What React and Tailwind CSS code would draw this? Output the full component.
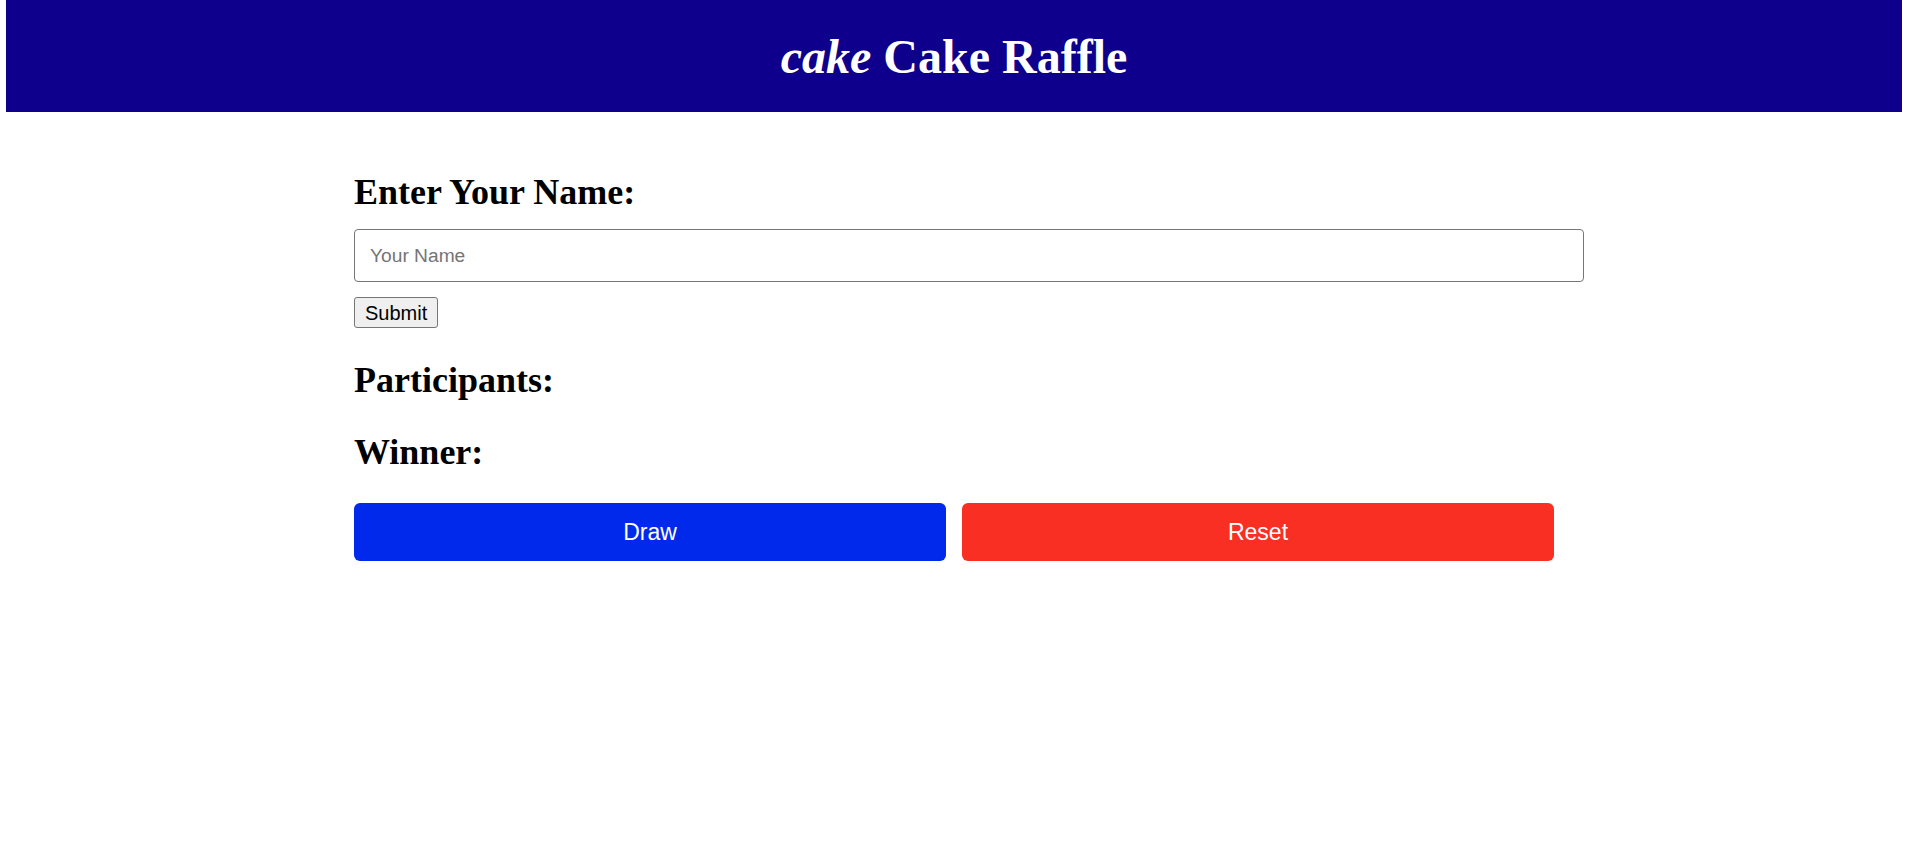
import { useState } from 'react';

export default function App() {
  const [name, setName] = useState('');
  const [participants, setParticipants] = useState([]);
  const [winner, setWinner] = useState(null);

  const handleSubmit = (e) => {
    e.preventDefault();
    if (name.trim() === '') return;
    setParticipants([...participants, name.trim()]);
    setName('');
  };

  const handleDraw = () => {
    if (participants.length === 0) return;
    setWinner(participants[Math.floor(Math.random() * participants.length)]);
  };

  const handleReset = () => {
    setParticipants([]);
    setWinner(null);
  };

  return (
    <div className="min-h-screen bg-white font-['Liberation_Serif',serif] text-black">
      <header className="ml-[6px] w-[1896px] h-[112px] bg-[#0e008c] flex items-center justify-center">
        <h1 className="text-[48px] leading-[55px] font-bold text-white">
          <i>cake</i> Cake Raffle
        </h1>
      </header>

      <main className="ml-[354px] w-[1230px] pt-[60px] flex flex-col">
        <h2 className="text-[36px] leading-[41px] font-bold">Enter Your Name:</h2>
        <form onSubmit={handleSubmit} className="mt-[16px] flex flex-col items-start">
          <input
            type="text"
            value={name}
            onChange={e => setName(e.target.value)}
            placeholder="Your Name"
            className="w-full h-[53px] border border-[#767676] rounded-[4px] px-[15px] font-['Liberation_Sans',sans-serif] text-[19.2px] text-black placeholder-[#757575] focus:outline-none"
          />
          <button
            type="submit"
            className="mt-[15px] h-[31px] px-[10px] border border-[#767676] rounded-[3px] bg-[#efefef] font-['Liberation_Sans',sans-serif] text-[20px] leading-[22px] text-black"
          >
            Submit
          </button>
        </form>

        <h2 className="mt-[32px] text-[36px] leading-[41px] font-bold">Participants:</h2>
        {participants.length > 0 && (
          <ul className="font-['Liberation_Sans',sans-serif] text-[19.2px]">
            {participants.map((p, i) => <li key={i}>{p}</li>)}
          </ul>
        )}
        <h2 className="mt-[31px] text-[36px] leading-[41px] font-bold">Winner:</h2>
        {winner && <p className="font-['Liberation_Sans',sans-serif] text-[19.2px]">{winner}</p>}

        <div className="mt-[30px] w-[1200px] flex gap-[16px] font-['Liberation_Sans',sans-serif]">
          <button
            onClick={handleDraw}
            className="flex-1 h-[58px] rounded-[6px] bg-[#0029eb] text-white text-[23px]"
          >
            Draw
          </button>
          <button
            onClick={handleReset}
            className="flex-1 h-[58px] rounded-[6px] bg-[#f92f23] text-white text-[23px]"
          >
            Reset
          </button>
        </div>
      </main>
    </div>
  );
}
